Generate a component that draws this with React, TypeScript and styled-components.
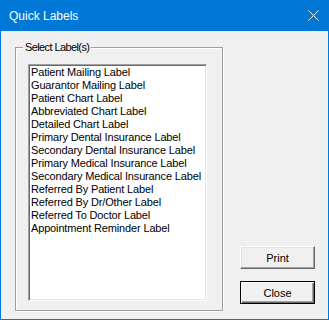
import React from "react";
import styled, { createGlobalStyle } from "styled-components";

const GlobalStyle = createGlobalStyle`
  html, body { margin: 0; padding: 0; background: #f0f0f0; }
  body { font-family: "Liberation Sans", Arial, sans-serif; }
`;

const Window = styled.div`
  width: 329px;
  height: 320px;
  box-sizing: border-box;
  border: 1px solid #0078d7;
  border-top: none;
  background: #f0f0f0;
  display: flex;
  flex-direction: column;
`;

const TitleBar = styled.div`
  height: 31px;
  flex: none;
  background: #0078d7;
  display: flex;
  align-items: center;
  justify-content: space-between;
  padding: 0 9px 0 8px;
  margin: 0 -1px;
  padding-left: 9px;
  padding-right: 10px;
`;

const Title = styled.span`
  color: #ffffff;
  font-family: "Liberation Sans", Arial, sans-serif;
  font-size: 12px;
  line-height: 14px;
`;

const CloseGlyph = styled.svg`
  display: block;
  width: 11px;
  height: 11px;
`;

const Body = styled.div`
  flex: 1;
  display: flex;
  padding: 16px 0 0 14px;
`;

const GroupBox = styled.div`
  position: relative;
  width: 208px;
  height: 264px;
  box-sizing: border-box;
  border: 1px solid #a0a0a0;
  box-shadow: inset 1px 1px 0 #ffffff, 1px 1px 0 #ffffff;
  padding: 16px 0 0 12px;
`;

const Legend = styled.span`
  position: absolute;
  top: -7px;
  left: 7px;
  padding: 0 2px;
  background: #f0f0f0;
  font-size: 11px;
  line-height: 13px;
  color: #000;
  letter-spacing: -0.6px;
`;

const ListBox = styled.ul`
  list-style: none;
  margin: 0;
  width: 179px;
  height: 237px;
  box-sizing: border-box;
  background: #ffffff;
  border-style: solid;
  border-width: 1px;
  border-color: #a0a0a0 #ffffff #ffffff #a0a0a0;
  box-shadow: inset 1px 1px 0 #696969, inset -1px -1px 0 #e3e3e3;
  padding: 1px 0 0 2px;
`;

const ListItem = styled.li`
  font-size: 11px;
  line-height: 13px;
  color: #000;
  white-space: nowrap;
  letter-spacing: -0.15px;
`;

const ButtonColumn = styled.div`
  align-self: flex-end;
  display: flex;
  flex-direction: column;
  gap: 12px;
  margin: 0 0 15px 17px;
`;

const Button = styled.button<{ $default?: boolean }>`
  width: 75px;
  height: 23px;
  box-sizing: border-box;
  padding: 0;
  margin: 0;
  background: #f0f0f0;
  font-family: "Liberation Sans", Arial, sans-serif;
  font-size: 11px;
  color: #000;
  border-style: solid;
  border-width: 1px;
  border-color: ${(p) =>
    p.$default ? "#000000" : "#ffffff #696969 #696969 #ffffff"};
  box-shadow: ${(p) =>
    p.$default
      ? "inset 1px 1px 0 #ffffff, inset -1px -1px 0 #696969, inset -2px -2px 0 #a0a0a0"
      : "inset -1px -1px 0 #a0a0a0, inset 1px 1px 0 #e3e3e3"};
`;

const items = [
  "Patient Mailing Label",
  "Guarantor Mailing Label",
  "Patient Chart Label",
  "Abbreviated Chart Label",
  "Detailed Chart Label",
  "Primary Dental Insurance Label",
  "Secondary Dental Insurance Label",
  "Primary Medical Insurance Label",
  "Secondary Medical Insurance Label",
  "Referred By Patient Label",
  "Referred By Dr/Other Label",
  "Referred To Doctor Label",
  "Appointment Reminder Label",
];

export default function App() {
  return (
    <>
      <GlobalStyle />
      <Window>
        <TitleBar>
          <Title>Quick Labels</Title>
          <CloseGlyph viewBox="0 0 11 11">
            <path d="M0.5 0.5 L10.5 10.5 M10.5 0.5 L0.5 10.5" stroke="#ffffff" strokeWidth="1" fill="none" />
          </CloseGlyph>
        </TitleBar>
        <Body>
          <GroupBox>
            <Legend>Select Label(s)</Legend>
            <ListBox>
              {items.map((t) => (
                <ListItem key={t}>{t}</ListItem>
              ))}
            </ListBox>
          </GroupBox>
          <ButtonColumn>
            <Button>Print</Button>
            <Button $default>Close</Button>
          </ButtonColumn>
        </Body>
      </Window>
    </>
  );
}
